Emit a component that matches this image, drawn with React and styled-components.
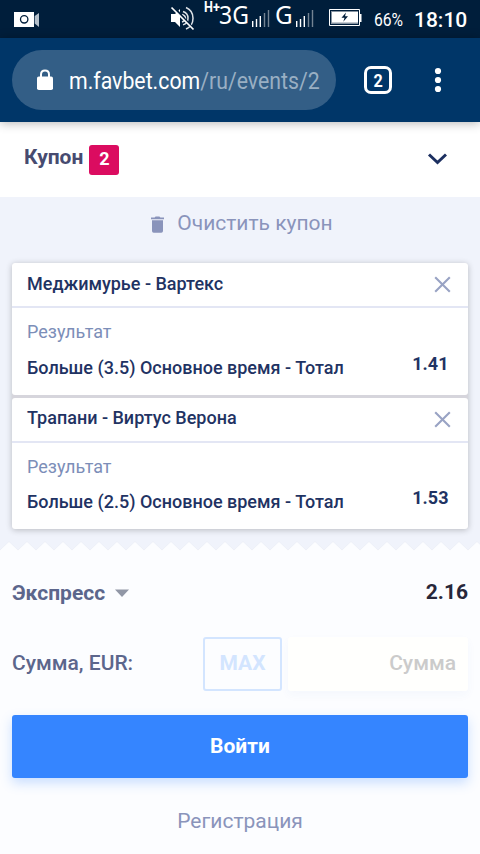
import styled, { createGlobalStyle } from "styled-components";

const bets = [
  {
    id: 1,
    event: "Меджимурье - Вартекс",
    market: "Результат",
    outcome: "Больше (3.5) Основное время - Тотал",
    odds: "1.41",
  },
  {
    id: 2,
    event: "Трапани - Виртус Верона",
    market: "Результат",
    outcome: "Больше (2.5) Основное время - Тотал",
    odds: "1.53",
  },
];

export default function App() {
  return (
    <>
      <GlobalStyle />
      <Screen>
        <StatusBar />
        <BrowserBar />
        <CouponHeader>
          <CouponTitle>Купон</CouponTitle>
          <CouponCount>{bets.length}</CouponCount>
          <ToggleButton aria-label="Свернуть">
            <svg width="20" height="12" viewBox="0 0 20 12">
              <path d="M2 1.5l8.5 8 8.5-8" fill="none" stroke="#1c2f60" strokeWidth="3" />
            </svg>
          </ToggleButton>
        </CouponHeader>
        <Slip>
          <ClearButton>
            <svg width="13" height="17" viewBox="0 0 13 17">
              <path
                d="M0 1.4h3.6l1-1h3.8l1 1H13v1.900H0zM1 4.300h11V15q0 1.700-1.700 1.700H2.700Q1 16.700 1 15z"
                fill="#8a94bb"
              />
            </svg>
            Очистить купон
          </ClearButton>
          <BetList>
            {bets.map((bet) => (
              <BetCard key={bet.id} bet={bet} />
            ))}
          </BetList>
        </Slip>
        <Zigzag />
        <Summary>
          <TypeRow>
            <BetType>Экспресс</BetType>
            <svg width="14" height="8" viewBox="0 0 14 8">
              <path d="M0 .5h14L7 8z" fill="#9197a6" />
            </svg>
            <TotalOdds>2.16</TotalOdds>
          </TypeRow>
          <StakeRow>
            <StakeLabel>Сумма, EUR:</StakeLabel>
            <MaxButton>MAX</MaxButton>
            <StakeInput placeholder="Сумма" />
          </StakeRow>
          <LoginButton>Войти</LoginButton>
          <RegisterLink>Регистрация</RegisterLink>
        </Summary>
      </Screen>
    </>
  );
}

function StatusBar() {
  return (
    <StatusWrapper>
      <StatusIcon $left={14} $top={12}>
        <svg width="26" height="16" viewBox="0 0 26 16">
          <path d="M0 0h20v15H0z" fill="#fff" />
          <circle cx="10.2" cy="7.3" r="3.7" fill="none" stroke="#001e3b" strokeWidth="1.3" />
          <path d="M20.7 4L25 1v14l-4.300-3.500z" fill="#b4bfca" />
        </svg>
      </StatusIcon>
      <StatusIcon $left={130} $top={6}>
        <svg width="26" height="25" viewBox="0 0 26 25">
          <path d="M1 8h4l5-5v18l-5-5H1z" fill="#fff" />
          <path
            d="M12 8.500q3.500 1 3.500 3.700T12 16M13 5.500q5 1.500 5 6.700t-5 6.700M16 1.500q7 3 7 10.700T16 23"
            fill="none"
            stroke="#dde2e7"
            strokeWidth="1.5"
          />
          <path d="M3 .5l21 23" stroke="#001e3b" strokeWidth="2.5" />
          <path d="M1.500 1.500l22 22" stroke="#fff" strokeWidth="1.7" />
        </svg>
      </StatusIcon>
      <StatusText $left={8} $top={-1} $size={14} $width={16} $weight={700} $scale={0.9}>
        H+
      </StatusText>
      <StatusText $left={-1} $top={-1} $size={25.5} $width={30} $font="Noto Sans" $scale={0.9}>
        3G
      </StatusText>
      <Signal />
      <StatusText $left={5} $top={-1} $size={25.5} $width={18} $font="Noto Sans" $scale={0.95}>
        G
      </StatusText>
      <Signal />
      <StatusIcon $left={15} $top={9}>
        <svg width="33" height="18" viewBox="0 0 33 18">
          <path d="M.5.5h30v16H.5z" fill="none" stroke="#fff" />
          <path d="M31 5h1.500v8H31z" fill="#fff" />
          <path d="M2 2h27v13H2z" fill="#8794a2" />
          <path d="M3 3h26v10.500H3z" fill="#fff" />
          <path d="M17 3.500l-4.500 5.300h3l-1.200 4 4.700-5.500h-3z" fill="#001e3b" />
        </svg>
      </StatusIcon>
      <StatusText $left={12} $top={9} $size={18} $width={30} $scale={0.87}>
        66%
      </StatusText>
      <StatusText $left={10} $top={8} $size={21} $width={55} $weight={500}>
        18:10
      </StatusText>
    </StatusWrapper>
  );
}

function Signal() {
  return (
    <StatusIcon $left={3} $top={10}>
      <svg width="18" height="17" viewBox="0 0 18 17" fill="#fff">
        <path d="M0 11h1.400v6H0zM3.800 9h1.400v8H3.800zM7.600 6h1.400v11H7.600z" />
        <path d="M11.800 3h1.400v14h-1.400zM15.800 0h1.400v17h-1.400z" opacity=".45" />
      </svg>
    </StatusIcon>
  );
}

function BrowserBar() {
  return (
    <BrowserWrapper>
      <AddressBar>
        <svg width="16" height="22" viewBox="0 0 16 22">
          <path d="M4 9V5.500q0-4 4-4t4 4V9" fill="none" stroke="#fff" strokeWidth="2" />
          <rect y="7.5" width="16" height="13.5" rx="1.8" fill="#fff" />
        </svg>
        <Url>
          m.favbet.com<span>/ru/events/2</span>
        </Url>
      </AddressBar>
      <TabCount>
        <span>2</span>
      </TabCount>
      <MenuButton aria-label="Меню">
        <svg width="8" height="26" viewBox="0 0 8 26" fill="#fff">
          <circle cx="4" cy="4" r="3.1" />
          <circle cx="4" cy="13" r="3.1" />
          <circle cx="4" cy="22" r="3.1" />
        </svg>
      </MenuButton>
    </BrowserWrapper>
  );
}

function BetCard({ bet }) {
  return (
    <CardWrapper>
      <CardHead>
        <EventName>{bet.event}</EventName>
        <svg width="17" height="17" viewBox="0 0 17 17">
          <path d="M1.200 1.200l14.600 14.600M15.800 1.200L1.200 15.800" stroke="#99a3c4" strokeWidth="2.1" />
        </svg>
      </CardHead>
      <CardBody>
        <div>
          <Market>{bet.market}</Market>
          <Outcome>{bet.outcome}</Outcome>
        </div>
        <Odds>{bet.odds}</Odds>
      </CardBody>
    </CardWrapper>
  );
}

function Zigzag() {
  return (
    <ZigzagSvg width="480" height="10" viewBox="0 0 480 10">
      <defs>
        <pattern id="teeth" width="18" height="10" patternUnits="userSpaceOnUse">
          <path d="M0 9L9 .5 18 9v1H0z" fill="#fcfdff" />
          <path d="M0 9L9 .5 18 9" fill="none" stroke="#e8ebf3" strokeWidth=".6" />
        </pattern>
      </defs>
      <rect width="480" height="10" fill="url(#teeth)" />
    </ZigzagSvg>
  );
}

const GlobalStyle = createGlobalStyle`
  * {
    box-sizing: border-box;
  }
  body {
    margin: 0;
    font-family: Roboto, "Noto Sans", sans-serif;
    background-color: #fcfdff;
  }
  button {
    border: none;
    padding: 0;
    background: none;
    font-family: inherit;
  }
  svg {
    display: block;
    flex-shrink: 0;
  }
  p {
    margin: 0;
  }
`;

const Screen = styled.div`
  width: 480px;
  height: 854px;
  display: flex;
  flex-direction: column;
  overflow: hidden;
`;

const StatusWrapper = styled.div`
  display: flex;
  align-items: flex-start;
  flex-shrink: 0;
  height: 38px;
  color: white;
  background-color: #001e3b;
`;

const StatusIcon = styled.div`
  margin-left: ${({ $left }) => $left}px;
  margin-top: ${({ $top }) => $top}px;
`;

const StatusText = styled.span`
  flex-shrink: 0;
  width: ${({ $width }) => $width}px;
  margin-left: ${({ $left }) => $left}px;
  margin-top: ${({ $top }) => $top}px;
  font-family: ${({ $font }) => ($font ? `"${$font}"` : "Roboto")}, sans-serif;
  font-size: ${({ $size }) => $size}px;
  font-weight: ${({ $weight = 400 }) => $weight};
  line-height: ${({ $size }) => Math.round($size * 1.2)}px;
  white-space: nowrap;
  transform: scaleX(${({ $scale = 1 }) => $scale});
  transform-origin: left;
`;

const BrowserWrapper = styled.div`
  display: flex;
  align-items: center;
  flex-shrink: 0;
  height: 84px;
  padding: 0 12px;
  background-color: #003668;
  box-shadow: 0 1px 10px rgba(0, 0, 0, 0.3);
  z-index: 1;
`;

const AddressBar = styled.div`
  display: flex;
  align-items: center;
  gap: 16px;
  width: 324px;
  height: 60px;
  padding-left: 25px;
  border-radius: 30px;
  background-color: #335e86;
`;

const Url = styled.span`
  margin-top: 2px;
  color: white;
  font-size: 24px;
  line-height: 30px;
  white-space: nowrap;
  transform: scaleX(0.887);
  transform-origin: left;
  & span {
    color: #99afc3;
  }
`;

const TabCount = styled.button`
  display: flex;
  align-items: center;
  justify-content: center;
  width: 28px;
  height: 28px;
  margin-left: 28px;
  border: 3px solid white;
  border-radius: 7px;
  color: white;
  font-size: 18px;
  font-weight: 700;
  & span {
    transform: scaleX(0.9);
  }
`;

const MenuButton = styled.button`
  margin-left: 42px;
`;

const CouponHeader = styled.header`
  display: flex;
  align-items: center;
  flex-shrink: 0;
  height: 75px;
  padding: 0 33px 0 24px;
  background-color: white;
`;

const CouponTitle = styled.h1`
  margin: 0 6px 5px 0;
  color: #474b70;
  font-size: 21px;
  font-weight: 700;
`;

const CouponCount = styled.span`
  width: 30px;
  height: 30px;
  border-radius: 3px;
  color: white;
  background-color: #db0c60;
  font-size: 18px;
  font-weight: 700;
  line-height: 28px;
  text-align: center;
`;

const ToggleButton = styled.button`
  margin: 0 0 1px auto;
`;

const Slip = styled.section`
  display: flex;
  flex-direction: column;
  flex-shrink: 0;
  height: 344px;
  padding: 0 12px;
  background-color: #f0f3fb;
`;

const ClearButton = styled.button`
  display: flex;
  align-items: center;
  justify-content: center;
  gap: 13px;
  height: 52px;
  margin-bottom: 14px;
  padding-left: 4px;
  color: #8a94bb;
  font-size: 21px;
  & svg {
    margin-top: 3px;
  }
`;

const BetList = styled.ul`
  display: flex;
  flex-direction: column;
  gap: 3px;
  margin: 0;
  padding: 0;
  list-style: none;
  border-radius: 3px;
  background-color: #d6d5dc;
  box-shadow: 0 1px 6px rgba(0, 0, 0, 0.24);
`;

const CardWrapper = styled.li`
  border-radius: 3px;
  background-color: white;
`;

const CardHead = styled.div`
  display: flex;
  align-items: center;
  justify-content: space-between;
  height: 45px;
  padding: 0 17px 0 15px;
  border-bottom: 2px solid #e3e6f4;
`;

const EventName = styled.p`
  margin-bottom: 3px;
  color: #1f3363;
  font-size: 18px;
  font-weight: 500;
`;

const CardBody = styled.div`
  display: flex;
  justify-content: space-between;
  height: 86.5px;
  padding: 12px 19.5px 0 15px;
`;

const Market = styled.p`
  color: #7c8eb8;
  font-size: 18px;
  line-height: 24px;
`;

const Outcome = styled.p`
  margin-top: 11.5px;
  color: #1f3363;
  font-size: 18px;
  font-weight: 500;
  line-height: 24px;
`;

const Odds = styled.p`
  margin-top: 31.5px;
  color: #1f3363;
  font-size: 18px;
  font-weight: 700;
  line-height: 24px;
`;

const ZigzagSvg = styled.svg`
  background-color: #f0f3fb;
`;

const Summary = styled.section`
  display: flex;
  flex-direction: column;
  flex: 1;
  padding: 28px 12px 0;
  background-color: #fcfdff;
`;

const TypeRow = styled.div`
  display: flex;
  align-items: center;
  height: 28px;
`;

const BetType = styled.span`
  margin-right: 10px;
  color: #5c668c;
  font-size: 21px;
  font-weight: 700;
`;

const TotalOdds = styled.span`
  margin: 0 0 2px auto;
  color: #27273a;
  font-size: 21px;
  font-weight: 700;
`;

const StakeRow = styled.div`
  display: flex;
  align-items: center;
  margin-top: 30px;
`;

const StakeLabel = styled.span`
  width: 191px;
  margin-bottom: 2px;
  color: #5c668c;
  font-size: 21px;
  font-weight: 500;
`;

const MaxButton = styled.button`
  width: 79px;
  height: 54px;
  padding-bottom: 2px;
  border: 2px solid #d3e5ff;
  border-radius: 3px;
  color: #d3e5ff;
  font-size: 21px;
  font-weight: 700;
`;

const StakeInput = styled.input`
  width: 180px;
  height: 54px;
  margin-left: 6px;
  padding: 0 12px 2px;
  border: none;
  border-radius: 3px;
  background-color: #fffffd;
  box-shadow: 0 4px 10px rgba(60, 90, 200, 0.04);
  font-family: inherit;
  font-size: 21px;
  font-weight: 500;
  text-align: right;
  &::placeholder {
    color: #cbcbcb;
  }
`;

const LoginButton = styled.button`
  height: 63px;
  margin-top: 24px;
  padding-bottom: 2px;
  border-radius: 3px;
  color: white;
  background-color: #3585ff;
  box-shadow: 0 5px 12px rgba(53, 133, 255, 0.25);
  font-size: 21px;
  font-weight: 700;
`;

const RegisterLink = styled.button`
  margin-top: 31px;
  color: #8a94bb;
  font-size: 21px;
`;
